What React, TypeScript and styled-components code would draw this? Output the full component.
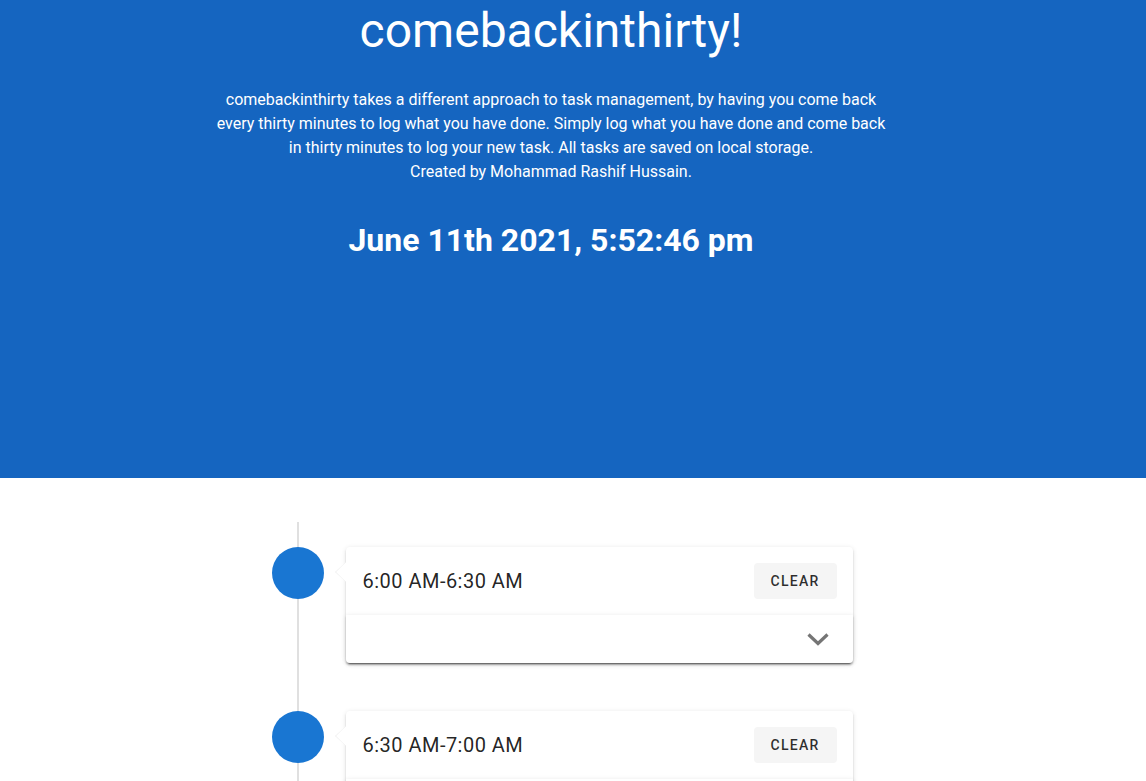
import React from "react";
import styled, { createGlobalStyle } from "styled-components";

const GlobalStyle = createGlobalStyle`
  html, body {
    margin: 0;
    padding: 0;
    overflow: hidden;
    background: #ffffff;
  }
  body {
    font-family: Roboto, "Noto Sans", Arial, sans-serif;
    -webkit-font-smoothing: antialiased;
  }
  * { box-sizing: border-box; }
`;

const Hero = styled.header`
  background: #1565c0;
  color: #ffffff;
  height: 478px;
  padding-right: 44px;
`;

const HeroInner = styled.div`
  text-align: center;
  padding-top: 6px;
`;

const Title = styled.h1`
  margin: 0;
  font-size: 48px;
  line-height: 50px;
  font-weight: 400;
`;

const Intro = styled.p`
  margin: 32px auto 0;
  max-width: 680px;
  font-size: 16px;
  line-height: 24px;
  font-weight: 400;
`;

const Clock = styled.h2`
  margin: 36px 0 0;
  font-size: 32px;
  line-height: 40px;
  font-weight: 700;
  letter-spacing: 0;
`;

const Main = styled.main`
  padding-right: 44px;
`;

const Timeline = styled.div`
  position: relative;
  width: 603px;
  margin: 44px auto 0;
  padding-top: 25px;

  &::before {
    content: "";
    position: absolute;
    top: 0;
    bottom: 0;
    left: 47px;
    width: 2px;
    background: rgba(0, 0, 0, 0.12);
  }
`;

const Item = styled.div`
  display: flex;
  align-items: flex-start;
  padding-bottom: 48px;
`;

const Divider = styled.div`
  position: relative;
  width: 96px;
  flex: 0 0 96px;
  display: flex;
  justify-content: center;
`;

const Dot = styled.div`
  width: 52px;
  height: 52px;
  border-radius: 50%;
  background: #1976d2;
`;

const Card = styled.div`
  position: relative;
  flex: 1;
  background: #ffffff;
  border-radius: 4px;
  box-shadow: 0 3px 1px -2px rgba(0, 0, 0, 0.2), 0 2px 2px 0 rgba(0, 0, 0, 0.14),
    0 1px 5px 0 rgba(0, 0, 0, 0.12);

  &::before,
  &::after {
    content: "";
    position: absolute;
    top: 15px;
    width: 0;
    height: 0;
    border-top: 10px solid transparent;
    border-bottom: 10px solid transparent;
  }
  &::before {
    left: -11px;
    border-right: 11px solid rgba(0, 0, 0, 0.08);
  }
  &::after {
    left: -10px;
    border-right: 10px solid #ffffff;
  }
`;

const CardHeader = styled.div`
  display: flex;
  align-items: center;
  justify-content: space-between;
  padding: 16px 16px 16px 17px;
`;

const SlotLabel = styled.span`
  font-size: 20px;
  line-height: 32px;
  font-weight: 400;
  letter-spacing: 0.024em;
  color: rgba(0, 0, 0, 0.87);
`;

const ClearButton = styled.button`
  height: 36px;
  min-width: 64px;
  padding: 0 17px;
  border: none;
  border-radius: 4px;
  background: #f5f5f5;
  color: rgba(0, 0, 0, 0.82);
  font-family: Roboto, "Noto Sans", Arial, sans-serif;
  font-size: 14px;
  font-weight: 500;
  letter-spacing: 0.0892857143em;
  text-transform: uppercase;
  cursor: pointer;
`;

const Panel = styled.div`
  height: 48px;
  display: flex;
  align-items: center;
  justify-content: flex-end;
  padding: 0 23px 0 16px;
  border-radius: 0 0 4px 4px;
  background: #ffffff;
  box-shadow: 0 3px 1px -2px rgba(0, 0, 0, 0.2), 0 2px 2px 0 rgba(0, 0, 0, 0.14),
    0 1px 5px 0 rgba(0, 0, 0, 0.12);
`;

const Chevron = () => (
  <svg width="24" height="24" viewBox="0 0 24 24" aria-hidden="true">
    <polyline
      points="2.5,7.5 12,16.5 21.5,7.5"
      fill="none"
      stroke="rgba(0,0,0,0.54)"
      strokeWidth="3.2"
    />
  </svg>
);

const slots = [
  "6:00 AM-6:30 AM",
  "6:30 AM-7:00 AM",
  "7:00 AM-7:30 AM",
  "7:30 AM-8:00 AM",
];

export default function App() {
  return (
    <>
      <GlobalStyle />
      <Hero>
        <HeroInner>
          <Title>comebackinthirty!</Title>
          <Intro>
            comebackinthirty takes a different approach to task management, by having you come back
            every thirty minutes to log what you have done. Simply log what you have done and come
            back in thirty minutes to log your new task. All tasks are saved on local storage.
            <br />
            Created by Mohammad Rashif Hussain.
          </Intro>
          <Clock>June 11th 2021, 5:52:46 pm</Clock>
        </HeroInner>
      </Hero>
      <Main>
        <Timeline>
          {slots.map((s) => (
            <Item key={s}>
              <Divider>
                <Dot />
              </Divider>
              <Card>
                <CardHeader>
                  <SlotLabel>{s}</SlotLabel>
                  <ClearButton>Clear</ClearButton>
                </CardHeader>
                <Panel>
                  <Chevron />
                </Panel>
              </Card>
            </Item>
          ))}
        </Timeline>
      </Main>
    </>
  );
}
